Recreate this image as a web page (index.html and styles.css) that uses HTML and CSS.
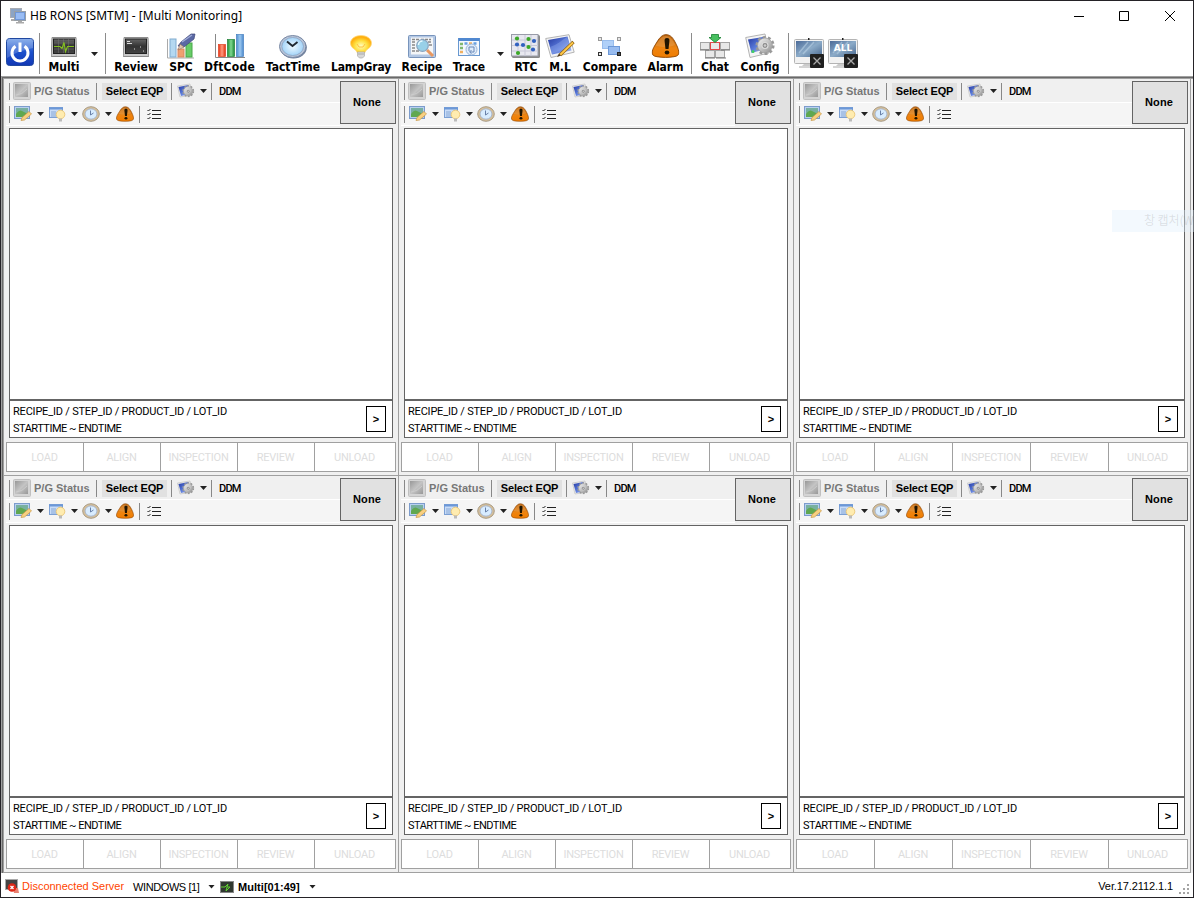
FILE: index.html
```html
<!DOCTYPE html>
<html lang="en">
<head>
<meta charset="utf-8">
<title>HB RONS [SMTM] - [Multi Monitoring]</title>
<link rel="stylesheet" href="styles.css">
</head>
<body>
<svg class="defs" width="0" height="0">
  <defs>
    <linearGradient id="gPower" x1="0" y1="0" x2="0" y2="1"><stop offset="0" stop-color="#6f9de6"/><stop offset=".5" stop-color="#1c50cc"/><stop offset="1" stop-color="#1238b4"/></linearGradient>
    <linearGradient id="gDark" x1="0" y1="0" x2="0" y2="1"><stop offset="0" stop-color="#666"/><stop offset=".5" stop-color="#333"/><stop offset="1" stop-color="#444"/></linearGradient>
    <linearGradient id="gBlue" x1="0" y1="0" x2="1" y2="0"><stop offset="0" stop-color="#4f8fd0"/><stop offset=".5" stop-color="#9cc8f0"/><stop offset="1" stop-color="#4a88cc"/></linearGradient>
    <linearGradient id="gRed" x1="0" y1="0" x2="1" y2="0"><stop offset="0" stop-color="#e83010"/><stop offset=".5" stop-color="#ff9a80"/><stop offset="1" stop-color="#e03010"/></linearGradient>
    <linearGradient id="gGreen" x1="0" y1="0" x2="1" y2="0"><stop offset="0" stop-color="#1e9038"/><stop offset=".5" stop-color="#80d890"/><stop offset="1" stop-color="#1c8834"/></linearGradient>
    <linearGradient id="gScreen" x1="0" y1="0" x2="1" y2="1"><stop offset="0" stop-color="#2438a0"/><stop offset=".5" stop-color="#5878d8"/><stop offset="1" stop-color="#b0c4f4"/></linearGradient>
    <linearGradient id="gMon" x1="0" y1="0" x2="1" y2="1"><stop offset="0" stop-color="#4a6a98"/><stop offset=".5" stop-color="#8cabc8"/><stop offset="1" stop-color="#486890"/></linearGradient>
    <linearGradient id="gMetal" x1="0" y1="0" x2="1" y2="1"><stop offset="0" stop-color="#f4f4f4"/><stop offset="1" stop-color="#909090"/></linearGradient>
    <linearGradient id="gAlarm" x1="0" y1="0" x2="0" y2="1"><stop offset="0" stop-color="#b86410"/><stop offset=".6" stop-color="#ee8410"/><stop offset="1" stop-color="#f07c00"/></linearGradient>
    <radialGradient id="gClock"><stop offset="0" stop-color="#f0faff"/><stop offset="1" stop-color="#a4d4f8"/></radialGradient>
    <radialGradient id="gBulb" cx=".5" cy=".6"><stop offset="0" stop-color="#fffcc0"/><stop offset=".6" stop-color="#ffe040"/><stop offset="1" stop-color="#ffb010"/></radialGradient>
    <linearGradient id="gPg" x1="0" y1="0" x2="1" y2="1"><stop offset="0" stop-color="#989898"/><stop offset=".5" stop-color="#c4c4c4"/><stop offset="1" stop-color="#989898"/></linearGradient>
  </defs>
  <symbol id="gear" viewBox="0 0 18 18">
    <circle cx="9" cy="9" r="7.300" fill="none" stroke="#999" stroke-width="2.600" stroke-dasharray="2.600 2"/>
    <circle cx="9" cy="9" r="6.700" fill="url(#gMetal)" stroke="#999" stroke-width=".6"/>
    <circle cx="9" cy="9" r="2.700" fill="#888" stroke="#ddd"/><circle cx="9" cy="9" r="1.200" fill="#ccc"/>
  </symbol>
  <symbol id="alarm" viewBox="0 0 28 24">
    <path d="M14.500 .7C18 .7 20.500 2.500 23 7c2.500 4.500 4 8 4.300 11 .2 3-1.300 4.200-4.800 4.700-5 .9-12 .9-17 0C2 22.200.5 21 .7 18 1 15 3 12 5.500 8 8.500 3 11 .7 14.500 .7Z" fill="url(#gAlarm)" stroke="#8c4400" stroke-width=".9"/>
    <path d="M4 12C8 5 11 2 14.500 2c4 0 7 4 9 9-7 3-12 2-19.500 1Z" fill="#e8a860" opacity=".4"/>
    <path d="M15.500 4c2 0 2.600 1 2.400 3L17 15h-3L13.100 7c-.2-2 .4-3 2.400-3Z" fill="#201400"/><ellipse cx="15.500" cy="18.500" rx="2.300" ry="1.900" fill="#201400"/>
  </symbol>
  <symbol id="monitor" viewBox="0 0 30 30">
    <rect x=".5" y="1.500" width="29" height="24" rx="1" fill="#f2f2f2" stroke="#b4b4b4"/>
    <path d="M2 3h26v16H2Z" fill="url(#gMon)"/><path d="M5 15 14 4M9 16 20 4" stroke="#b8d0e4" stroke-width="1.500" opacity=".6"/>
    <rect x="14" y="0" width="1.500" height="2" fill="#222"/><path d="M10 26h8l1 2H8Z" fill="#ccc"/><path d="M5 29h15" stroke="#aaa"/>
    <rect x="16" y="16" width="14" height="14" rx="1" fill="#202020"/><path d="m19.500 19.500 7 7m0-7-7 7" stroke="#aaa" stroke-width="1.300"/>
  </symbol>
  <symbol id="scope" viewBox="0 0 26 20">
    <path d="M1 .5h24l.8 19H.2Z" fill="#c8c8c8" stroke="#8c8c8c"/><rect x="2.500" y="2" width="21" height="14.500" fill="url(#gDark)" stroke="#222"/>
    <path d="M7.500 2v14m5-14v14m5-14v14M3 6h20M3 12h20" stroke="#777" stroke-width=".5"/>
    <path d="M3 9.500h6l2 2 2-6 1.500 9 2-5H23" fill="none" stroke="#84c020" stroke-width="1.200"/>
  </symbol>
  <symbol id="console" viewBox="0 0 26 20">
    <path d="M1 .5h24l.8 19H.2Z" fill="#c8c8c8" stroke="#8c8c8c"/><rect x="2.500" y="2" width="21" height="14.500" fill="url(#gDark)" stroke="#222"/>
    <path d="M4 4.500h3M4 6.500h5M11 12h1m5-2h1m2 4h1" stroke="#ddd"/>
  </symbol>
  <symbol id="photo" viewBox="0 0 30 25">
    <path d="M.7 4.500 24 .7l5.200 17.500L6 23.500Z" fill="#f4f4f4" stroke="#b4b4b4"/><path d="M3 6 22.500 2.500l4 14L7 20.500Z" fill="url(#gScreen)"/><path d="M5 13c7-2 12-7 17-10l3 9-18 8Z" fill="#9fb4f0" opacity=".35"/>
  </symbol>
</svg>

<div class="window">
  <header class="titlebar">
    <svg class="app-icon" viewBox="0 0 18 18"><rect x="1.500" y="1.500" width="11" height="9" fill="#8ca4c4" stroke="#a8acb4"/><path d="M2 12h4v2H2z" fill="#aaa"/><rect x="5.500" y="4.500" width="11" height="9" fill="#7098d8" stroke="#98a0a8"/><rect x="7" y="6" width="8" height="6" fill="#98bcf4"/><path d="M9 14h4v1h2v1.500H7V15h2Z" fill="#aaa"/></svg>
    <h1 class="title">HB RONS [SMTM] - [Multi Monitoring]</h1>
    <svg class="win-buttons" viewBox="0 0 104 12"><path d="M1 6.500h10M46.500 1.500h9v9h-9ZM92 1l10 10m0-10L92 11" fill="none" stroke="#000"/></svg>
  </header>

  <nav class="toolbar">
    <svg class="power" viewBox="0 0 28 28"><rect x=".5" y=".5" width="27" height="27" rx="3" fill="url(#gPower)" stroke="#2048a0"/><path d="M1 1h26v9Q14 12 1 20Z" fill="#fff" opacity=".2"/><path d="M9.500 8.300a8 8 0 1 0 9 0" fill="none" stroke="#fff" stroke-width="3"/><path d="M14 4.500v9.500" stroke="#fff" stroke-width="3"/></svg>
    <i class="bar"></i>
    <div class="tool"><svg viewBox="0 0 30 26"><use href="#scope" x="2" y="4" width="26" height="20"/></svg><span>Multi</span></div>
    <i class="arrow"></i>
    <i class="bar"></i>
    <div class="tool"><svg viewBox="0 0 30 26"><use href="#console" x="2" y="4" width="26" height="20"/></svg><span>Review</span></div>
    <div class="tool"><svg viewBox="0 0 30 26"><path d="M1.500 6v19H28" fill="none" stroke="#aaa"/><rect x="4" y="6" width="6" height="18" fill="#b4d8f0" stroke="#80acd0"/><rect x="12" y="16" width="6" height="8" fill="#f0a070" stroke="#d88860"/><rect x="20" y="10" width="6" height="14" fill="#68cc68" stroke="#48a848"/><path d="m12 13 3-4L25 1l4 0-1 5-10 8Z" fill="#5a68a4" stroke="#404878" stroke-width=".7"/><path d="m12 17 2-6 4 3Z" fill="#e0c4ac" stroke="#806050" stroke-width=".5"/><path d="m16 9 10-7" stroke="#a0acd8" stroke-width="1.300"/></svg><span>SPC</span></div>
    <div class="tool"><svg class="wide" viewBox="0 0 32 26"><path d="M1.500 1v23.500H31" fill="none" stroke="#888"/><rect x="4.500" y="11.500" width="7" height="12" fill="url(#gRed)" stroke="#e04020" stroke-width=".7"/><rect x="13.500" y="6.500" width="7" height="17" fill="url(#gGreen)" stroke="#208038" stroke-width=".7"/><rect x="22.500" y="1.500" width="7" height="22" fill="url(#gBlue)" stroke="#4880c0" stroke-width=".7"/></svg><span class="dft">DftCode</span></div>
    <div class="tool"><svg viewBox="0 0 30 26"><ellipse cx="15.500" cy="14.500" rx="13.300" ry="11" fill="#70809c"/><ellipse cx="14.700" cy="13.500" rx="13.200" ry="11" fill="#b8c4d8" stroke="#7888a4"/><ellipse cx="14.700" cy="13.500" rx="10.800" ry="9" fill="url(#gClock)" stroke="#8098b8" stroke-width=".6"/><path d="m9 8.500 5.500 4.500 5-4" fill="none" stroke="#202830" stroke-width="1.900"/></svg><span>TactTime</span></div>
    <div class="tool"><svg viewBox="0 0 30 26"><path d="M15 2.500C9 2.500 4.500 6 4.500 10c0 4 3 5.500 5 7l2 3h7l2-3c2-1.500 5-3 5-7 0-4-4.500-7.500-10.500-7.500Z" fill="url(#gBulb)" stroke="#ffd880" stroke-width=".8"/><path d="m11 11 2 3h4l2-3" stroke="#ffc040" fill="none"/><path d="M11.500 19h7v4l-2 2h-3l-2-2Z" fill="#d8d8d8" stroke="#aaa" stroke-width=".7"/><path d="M12 21h6" stroke="#aaa"/></svg><span class="lamp">LampGray</span></div>
    <div class="tool"><svg viewBox="0 0 30 26"><rect x="1.500" y="2.500" width="27" height="22" rx="1" fill="#b4c8e4" stroke="#7894bc"/><rect x="4" y="4.500" width="22" height="17" fill="#f4f6f8"/><path d="M5 6.500h7m2 0h10M5 9h4m8 0h7M5 12h3m-3 3h3m14-3h3M5 18h7" stroke="#888" stroke-width="1.300" stroke-dasharray="3 1"/><path d="m20 17 6 6" stroke="#e89860" stroke-width="3"/><circle cx="15.500" cy="12.500" r="5.800" fill="#98d0e8" stroke="#88a4c0" stroke-width="1.200"/><path d="M11.500 12a4 4 0 0 1 4-4" stroke="#e8faff" stroke-width="1.500" fill="none"/></svg><span>Recipe</span></div>
    <div class="tool"><svg viewBox="0 0 30 26"><rect x="4.500" y="5.500" width="21" height="17" fill="#f4f8fe" stroke="#6898d0"/><path d="M4.500 6.500h21" stroke="#5088d0" stroke-width="3"/><path d="M6 11h3M6 15h3" stroke="#80b870" stroke-width="2.500"/><path d="M10.500 10.500h3m6 0h3" stroke="#68a0e0" stroke-width="2.500"/><path d="M15 10.500h3M6 19h3" stroke="#f0b060" stroke-width="2.500"/><circle cx="17.500" cy="16.500" r="5.500" fill="#e0ecfa" stroke="#98b4d8"/><path d="M15 18v-4h5v5h-4m1.500-2L15.500 19l2 1.500" stroke="#6888b8" fill="none"/></svg><span>Trace</span></div>
    <i class="arrow"></i>
    <div class="tool"><svg viewBox="0 0 30 26"><rect x="1" y="2" width="28" height="23" rx="1.500" fill="#888"/><rect x=".5" y="1.500" width="26.500" height="21.500" fill="#e8e8f0" stroke="#999ca8"/><path d="M7 2v21m7-21v21m6-21v21M1 7h26M1 12.500h26M1 18h26" stroke="#c8c8d8"/><g fill="#3ca828"><circle cx="6" cy="5.500" r="2.100"/><circle cx="17.500" cy="6" r="2.100"/><circle cx="17.500" cy="14" r="2.100"/><circle cx="7" cy="20" r="2.100"/></g><g fill="#3060c0"><circle cx="6" cy="11.500" r="2.100"/><circle cx="12" cy="12" r="2.100"/><circle cx="23" cy="8" r="2.100"/><circle cx="22" cy="16.500" r="2.100"/></g></svg><span>RTC</span></div>
    <div class="tool"><svg viewBox="0 0 30 26"><use href="#photo" x="0" y="1" width="30" height="25"/><path d="M28.500 9 15 22" stroke="#8c6010" stroke-width="3.200"/><path d="M28 9.500 15 22" stroke="#ffc848" stroke-width="2"/><path d="m12 24 2-3.500 2 2Z" fill="#584020"/></svg><span>M.L</span></div>
    <div class="tool"><svg viewBox="0 0 30 26"><rect x="7.500" y="7.500" width="11" height="8" fill="#b0d0f8" stroke="#98bcec"/><rect x="13.500" y="13.500" width="11" height="8" fill="#98bcf0" stroke="#6c98d8"/><g fill="#e8e8e8" stroke="#999"><rect x="3.500" y="4.500" width="3" height="3"/><rect x="22.500" y="4.500" width="3" height="3"/><rect x="3.500" y="19.500" width="3" height="3" stroke="#333"/><rect x="22.500" y="19.500" width="3" height="3" fill="#555" stroke="#222"/></g></svg><span>Compare</span></div>
    <div class="tool"><svg viewBox="0 0 30 26"><use href="#alarm" x="1.500" y="1" width="28" height="24"/></svg><span>Alarm</span></div>
    <i class="bar"></i>
    <div class="tool"><svg viewBox="0 0 30 26"><g fill="#e8e8e8" stroke="#a4a4a4"><rect x=".5" y="9.500" width="9" height="7"/><rect x="20.500" y="9.500" width="9" height="7"/><rect x="5.500" y="17.500" width="9" height="7"/><rect x="15.500" y="17.500" width="9" height="7"/><rect x="10.500" y="9.500" width="9" height="7" stroke="#e04848"/></g><path d="M0 17h9m12 0h9M5 25h10m1 0h10" stroke="#777"/><path d="M11.500 1.500h7v3h2.500L15 9.500 9 4.500h2.500Z" fill="#48c060" stroke="#188030" stroke-width=".8"/></svg><span>Chat</span></div>
    <div class="tool"><svg viewBox="0 0 30 26"><path d="M.7 4.500 20 1l4 19-19 4.500Z" fill="#f4f4f4" stroke="#b4b4b4"/><path d="M3 6.500 18 4l3 12L6.500 20Z" fill="url(#gScreen)"/><circle cx="8" cy="18.500" r="1.500" fill="#40d060"/><use href="#gear" x="10" y="1" width="20" height="23"/></svg><span>Config</span></div>
    <i class="bar"></i>
    <svg class="screen" viewBox="0 0 30 30"><use href="#monitor" width="30" height="30"/></svg>
    <svg class="screen" viewBox="0 0 30 30"><use href="#monitor" width="30" height="30"/><text class="all" x="15" y="12.500" text-anchor="middle">ALL</text></svg>
  </nav>

  <main class="panels" id="panels"></main>

  <footer class="status">
    <svg class="net" viewBox="0 0 14 15"><rect x=".5" y=".5" width="12" height="10" fill="#444" stroke="#aaa"/><path d="M8 9h5l1 5H9Z" fill="#e88070"/><circle cx="7" cy="8.500" r="4.300" fill="#e02818"/><path d="m5.500 7 3 3m0-3-3 3" stroke="#fff" stroke-width="1.300"/></svg>
    <span class="disconnected">Disconnected Server</span>
    <span class="windows">WINDOWS [1]</span>
    <i class="arrow small"></i>
    <svg class="mini" viewBox="0 0 14 12"><rect x=".5" y=".5" width="13" height="11" fill="#303830" stroke="#888"/><path d="M1 6h4l3-3-1 3h3l-4 4 1-4" stroke="#60d030" fill="none"/></svg>
    <span class="multi">Multi[01:49]</span>
    <i class="arrow small"></i>
    <span class="version">Ver.17.2112.1.1</span>
    <svg class="grip" viewBox="0 0 11 11"><path d="M8 0h2v2H8zM4 4h2v2H4zm4 0h2v2H8zM0 8h2v2H0zm4 0h2v2H4zm4 0h2v2H8z" fill="#a4a4a4"/></svg>
  </footer>
  <div class="ghost">창 캡처(W</div>
</div>

<template id="panel">
  <section class="panel">
    <div class="head">
      <div class="strips">
        <div class="strip first">
          <i class="line"></i>
          <svg class="pg" viewBox="0 0 18 18"><rect x=".5" y=".5" width="17" height="17" rx="1" fill="#d4d4d4" stroke="#c0c0c0"/><rect x="2" y="2" width="13" height="13" fill="url(#gPg)"/><path d="M3 13q6 0 11-6" stroke="#ccc" fill="none"/></svg>
          <span class="pg-label">P/G Status</span>
          <i class="line"></i>
          <button class="select">Select EQP</button>
          <i class="line"></i>
          <svg class="cog" viewBox="0 0 18 18"><path d="M.5 4 13 2l2 11L3 15Z" fill="#eee" stroke="#bbb" stroke-width=".6"/><path d="m1.500 5 10-2 2 9-9.500 2Z" fill="url(#gScreen)"/><use href="#gear" x="5" y="3" width="12.500" height="12.500"/></svg>
          <i class="arrow"></i>
          <i class="line"></i>
          <span class="ddm">DDM</span>
        </div>
        <div class="strip second">
          <i class="line"></i>
          <svg viewBox="0 0 18 18"><rect x=".5" y="1.500" width="15" height="12" fill="#b8d0f0" stroke="#7c9ccc"/><path d="M2 3h12v9H2Z" fill="#78b0a0"/><path d="M2 9q3-5 6-3l6 3v3H2Z" fill="#60a850"/><path d="m7 15.500 1-3 7-6 2.500 2.500-7 6Z" fill="#f8d080" stroke="#c89848" stroke-width=".7"/></svg>
          <i class="arrow"></i>
          <svg viewBox="0 0 18 18"><rect x="1.500" y="2.500" width="13" height="10" fill="#c8dcf8" stroke="#7ca0d4"/><path d="M1 3.500h14" stroke="#6c98d8" stroke-width="2"/><path d="M3 7h5M3 9h5M3 11h5" stroke="#88a8d4"/><circle cx="12.500" cy="9.500" r="4.300" fill="#ffecb0" stroke="#e8c068" stroke-width=".8"/><path d="M11 13.500h3v3h-3z" fill="#bbb"/></svg>
          <i class="arrow"></i>
          <svg viewBox="0 0 18 18"><ellipse cx="9" cy="9" rx="8.300" ry="7.300" fill="#d8c098" stroke="#a89c88"/><ellipse cx="9" cy="9" rx="6" ry="5.200" fill="#d8ecff" stroke="#a8b4c8"/><path d="M8.500 5.500V10l3-2" stroke="#6880a8" fill="none"/></svg>
          <i class="arrow"></i>
          <svg viewBox="0 0 18 18"><use href="#alarm" x="0" y="1" width="18" height="16"/></svg>
          <i class="line"></i>
          <svg class="list" viewBox="0 0 14 12"><path d="M5 2.500h9M5 6.500h9M5 10.500h9M.5 2l1 1 2-2M.5 6l1 1 2-2M.5 10l1 1 2-2" fill="none" stroke="#222"/></svg>
        </div>
      </div>
      <button class="none">None</button>
    </div>
    <div class="view"></div>
    <div class="info">
      <p>RECIPE_ID / STEP_ID / PRODUCT_ID / LOT_ID<br><span>STARTTIME ~ ENDTIME</span></p>
      <button class="next">&gt;</button>
    </div>
    <div class="steps"><span>LOAD</span><span>ALIGN</span><span>INSPECTION</span><span>REVIEW</span><span>UNLOAD</span></div>
  </section>
</template>
<script src="panels.js"></script>
</body>
</html>
```
FILE: panels.js
```js
const panels = document.getElementById('panels');
const template = document.getElementById('panel');
for (let i = 0; i < 6; i++) {
  panels.append(template.content.cloneNode(true));
}
```
FILE: styles.css
```css
* { box-sizing: border-box; }
body { margin: 0; font-family: "Liberation Sans", sans-serif; color: #000; overflow: hidden; }
svg { display: block; flex: none; }
.defs { position: absolute; }
button { font: inherit; color: inherit; padding: 0; border-radius: 0; }
.window { position: relative; width: 1194px; height: 898px; border: 1px solid #242226; background: #fff; display: flex; flex-direction: column; }

.titlebar { height: 29px; display: flex; align-items: center; padding-left: 8px; flex: none; }
.app-icon { width: 18px; height: 18px; }
.title { margin: 0 0 0 3px; font: 400 12px/20px "Noto Sans", sans-serif; white-space: nowrap; letter-spacing: 0.02px; }
.win-buttons { width: 104px; height: 12px; margin: 0 16px 0 auto; }

.toolbar { height: 46px; flex: none; padding-left: 3px; display: grid; grid-template-columns: 32px 7px 42px 19px 3px 58px 32px 65px 62px 74px 48px 46px 17px 34px 34px 66px 45px 7px 40px 50px 7px 34px 34px; justify-items: center; align-items: start; }
.power { width: 28px; height: 28px; margin-top: 8px; }
.bar { width: 1px; height: 41px; margin-top: 3px; background: #8c8c8c; }
.arrow { width: 7px; height: 4px; background: #222; clip-path: polygon(0 0, 100% 0, 50% 100%); flex: none; }
.toolbar .arrow { margin-top: 22px; }
.tool { display: flex; flex-direction: column; align-items: center; padding-top: 3px; }
.tool svg { width: 30px; height: 26px; }
.tool .wide { width: 32px; }
.tool span { margin-top: 1px; font: 700 12px/14px "DejaVu Sans Condensed", "DejaVu Sans", sans-serif; font-stretch: condensed; white-space: nowrap; }
.tool .dft { letter-spacing: 0.25px; }
.tool .lamp { letter-spacing: -0.15px; }
.screen { width: 30px; height: 30px; margin-top: 8px; }
.all { font: 900 9px "DejaVu Sans", sans-serif; fill: #fff; }

.panels { height: 797px; flex: none; display: grid; grid-template-columns: 395px 395px 397px; grid-template-rows: 397px 397px; padding: 3px 2px 0 3px; background: #f0f0f0; box-shadow: inset 1px 1px #a0a0a0, inset 2px 2px #696969, inset 3px 3px #a0a0a0; }
.panel { border-right: 1px solid #a0a0a0; border-bottom: 1px solid #a0a0a0; padding: 2px 2px 3px; display: flex; flex-direction: column; min-width: 0; }
.head { display: flex; height: 47px; flex: none; }
.strips { flex: 1; margin-top: -1px; }
.strip { display: flex; align-items: center; height: 23px; border-bottom: 1px solid #fff; padding-left: 3px; }
.second { background: #f5f5f5; }
.line { width: 1px; height: 17px; background: #888; flex: none; }
.strip svg { width: 18px; height: 18px; }
.pg { margin-left: 3px; }
.pg-label { width: 58px; margin: 0 4px 0 3px; font-size: 11px; font-weight: 700; color: #777; white-space: nowrap; }
.select { width: 65px; height: 17px; margin: 0 4px 0 5px; border: 0; background: #e1e1e1; font-size: 11px; font-weight: 700; white-space: nowrap; letter-spacing: -0.1px; }
.cog { margin: 0 5px 0 5px; }
.cog + .arrow { margin-right: 4px; }
.ddm { margin: 1px 0 0 7px; font: 500 11px Roboto, sans-serif; letter-spacing: -0.8px; }
.second svg { margin: 0 5px 0 4px; }
.second svg:nth-of-type(4) { margin-right: 5px; }
.second .list { width: 14px; height: 12px; margin: -1px 0 0 7px; }
.none { width: 56px; height: 43px; padding: 0 2px 2px 0; border: 1px solid #646464; background: #e1e1e1; font-size: 11px; font-weight: 700; letter-spacing: 0.1px; }
.view { height: 273px; flex: none; margin: 0 3px; border: 1px solid #646464; border-bottom-width: 2px; background: #fff; }
.info { height: 37px; flex: none; margin: 0 3px; border: 1px solid #646464; border-top: 0; background: #fff; display: flex; justify-content: space-between; padding: 1px 6px 0 3px; }
.info p { margin: 1px 0 0; font: 400 11px/17px Roboto, sans-serif; letter-spacing: -0.2px; white-space: nowrap; }
.info p span { letter-spacing: -0.5px; }
.next { width: 20px; height: 26px; margin-top: 4px; border: 1px solid #000; background: #fff; font: 700 11px "Liberation Sans", sans-serif; }
.steps { height: 30px; flex: none; margin-top: 4px; border: 1px solid #a0a0a0; background: #fff; display: grid; grid-template-columns: repeat(4, 77px) 1fr; }
.panel:nth-child(3n) .steps { grid-template-columns: repeat(4, 78px) 1fr; }
.steps span { display: flex; align-items: center; justify-content: center; padding-right: 1px; border-right: 1px solid #a0a0a0; font: 400 11px Roboto, sans-serif; letter-spacing: -0.25px; color: #ddd; }
.steps span:last-child { border-right: 0; }

.status { flex: 1; display: flex; align-items: center; font-size: 11px; padding: 2px 3px 0 4px; white-space: nowrap; }
.net { width: 14px; height: 15px; }
.disconnected { width: 103px; margin: -1px 0 0 3px; color: #ff4500; }
.windows { width: 67px; margin: 1px 0 0 8px; letter-spacing: -0.4px; }
.small { width: 7px; height: 4px; margin-top: 1px; }
.windows + .small { margin-left: 8px; }
.mini { width: 14px; height: 12px; margin: 1px 0 0 5px; }
.multi { width: 63px; margin: 1px 0 0 4px; font-weight: 700; letter-spacing: 0.05px; }
.multi + .small { margin-left: 8px; }
.version { margin-left: auto; letter-spacing: -0.1px; }
.grip { width: 11px; height: 11px; margin: 6px 0 0 6px; }
.ghost { position: absolute; left: 1111px; top: 209px; width: 82px; height: 22px; padding-left: 32px; background: rgba(225, 240, 252, .4); color: rgba(120, 120, 120, .2); font: 12px/20px "Noto Sans CJK KR", sans-serif; letter-spacing: -0.1px; white-space: nowrap; }
```
